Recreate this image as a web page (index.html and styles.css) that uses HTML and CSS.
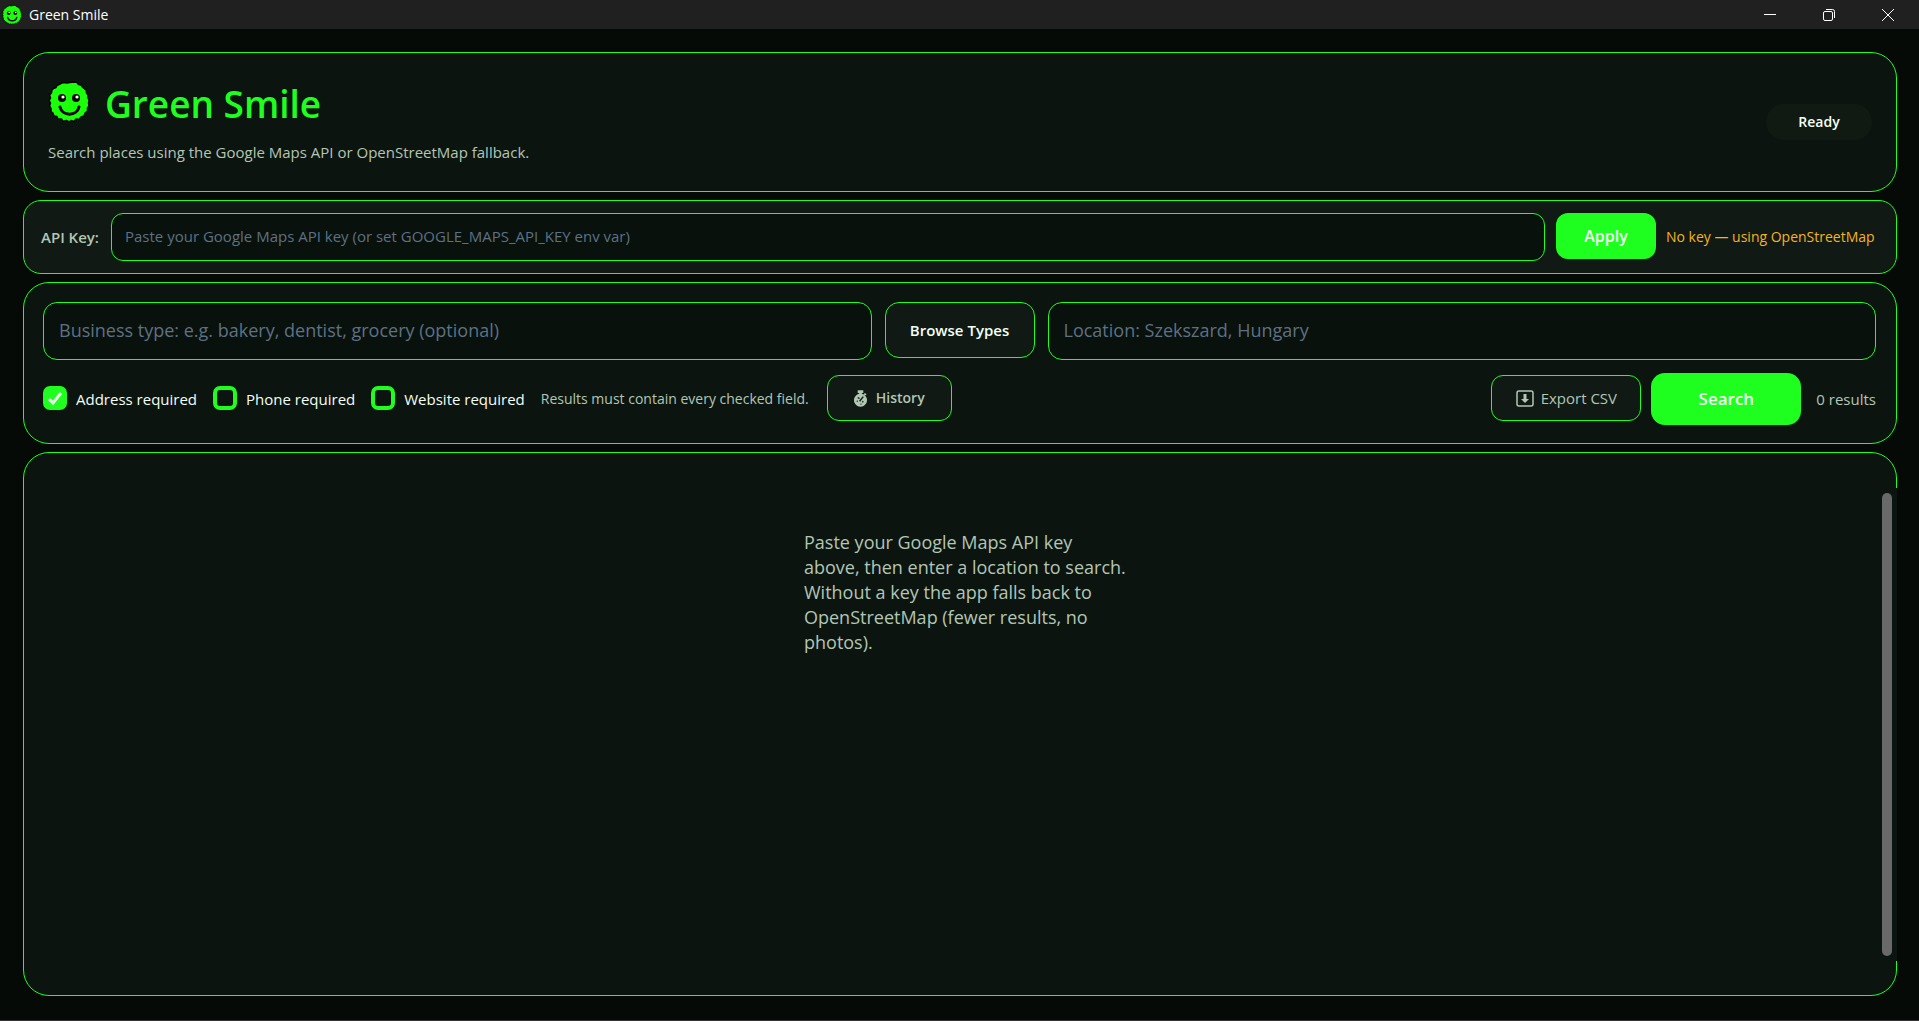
FILE: index.html
```html
<!DOCTYPE html>
<html lang="en">
<head>
<meta charset="utf-8">
<title>Green Smile</title>
<link rel="stylesheet" href="styles.css">
</head>
<body>
<svg class="defs" aria-hidden="true">
  <symbol id="face" viewBox="0 0 42 42">
    <path d="M12 3 15 1.500 19 2 22 1.500 26 1 29 1.500 30.500 3.500 33 4 34.500 6 36 7.500 38 9 38.500 12 40 14 40 17 41 19 40.500 22 41 25 39.500 27 39.500 30 37 32 36 35 33 36 31 38.500 28 38 26 40.500 23 39.500 21 41 18.500 39.500 15 40.500 13.500 38 10 38 9 35.500 6 35 5 32 3 30.500 3 27.500 1.500 25 2.500 22 1 19.500 2.500 17 1.500 14 3.500 12 4 9 5.500 7.500 8 6.500 9 4.500z" fill="#1aff0a" stroke="#020602" stroke-width="1.500" stroke-linejoin="round"/>
    <ellipse cx="14" cy="17" rx="4" ry="4" fill="#020602"/>
    <ellipse cx="28" cy="17" rx="4" ry="4" fill="#020602"/>
    <circle cx="15" cy="16" r="1.600" fill="#fff"/>
    <circle cx="29" cy="16" r="1.600" fill="#fff"/>
    <path d="M12 26c2 9.500 17 9.500 19 0" fill="none" stroke="#020602" stroke-width="3" stroke-linecap="round"/>
  </symbol>
</svg>

<header class="titlebar">
  <svg class="titlebar-icon"><use href="#face"/></svg>
  <span class="titlebar-name">Green Smile</span>
  <button class="winbtn" aria-label="Minimize"><svg viewBox="0 0 12 12"><path d="M0 5.500h12"/></svg></button>
  <button class="winbtn" aria-label="Restore"><svg viewBox="0 0 12 12"><rect x=".5" y="2.500" width="9" height="9" rx="1.500"/><path d="M3 .5h6.500a2 2 0 0 1 2 2V9"/></svg></button>
  <button class="winbtn" aria-label="Close"><svg viewBox="0 0 12 12"><path d="M0 0l12 12M12 0L0 12"/></svg></button>
</header>

<main class="app">
  <section class="card hero">
    <div class="intro">
      <div class="brand">
        <svg class="brand-icon"><use href="#face"/></svg>
        <h1>Green Smile</h1>
      </div>
      <p class="muted tagline">Search places using the Google Maps API or OpenStreetMap fallback.</p>
    </div>
    <span class="status">Ready</span>
  </section>

  <section class="card keybar">
    <label class="key-label" for="key">API Key:</label>
    <input class="field field-key" id="key" type="text" placeholder="Paste your Google Maps API key (or set GOOGLE_MAPS_API_KEY env var)">
    <button class="btn primary apply">Apply</button>
    <span class="warning">No key — using OpenStreetMap</span>
  </section>

  <section class="card search">
    <div class="row">
      <input class="field" type="text" aria-label="Business type" placeholder="Business type: e.g. bakery, dentist, grocery (optional)">
      <button class="btn browse">Browse Types</button>
      <input class="field" type="text" aria-label="Location" placeholder="Location: Szekszard, Hungary">
    </div>
    <div class="row options">
      <label class="check"><input type="checkbox" checked>Address required</label>
      <label class="check"><input type="checkbox">Phone required</label>
      <label class="check"><input type="checkbox">Website required</label>
      <span class="muted hint">Results must contain every checked field.</span>
      <button class="btn small history">
        <svg class="watch" viewBox="0 0 14 18"><path d="M4 0h6v3H8.500v1A7 7 0 1 1 5.500 4V3H4z" fill="currentColor"/><path d="M11 4l2 1" stroke="currentColor" stroke-width="2"/><path d="M4 8l2 1M10 7l-4 5M10 12l-1 1M7 15h1M3 12h1" stroke="#101a14" stroke-width="1.500"/></svg>
        History</button>
      <button class="btn small export">
        <svg class="down" viewBox="0 0 18 17"><rect x="1" y="1" width="16" height="15" rx="2" fill="none" stroke="currentColor" stroke-width="1.500"/><path d="M7.500 4h3v5H13l-4 4-4-4h2.500z" fill="currentColor"/></svg>
        Export CSV</button>
      <button class="btn primary go">Search</button>
      <span class="count">0 results</span>
    </div>
  </section>

  <section class="card results">
    <div class="scroller">
      <p class="muted empty">Paste your Google Maps API key above, then enter a location to search. Without a key the app falls back to OpenStreetMap (fewer results, no photos).</p>
      <div class="thumb"></div>
    </div>
  </section>
</main>
</body>
</html>
```
FILE: styles.css
```css
:root {
  --green: #1fff1f;
  --bg: #050a07;
  --card: #0c1410;
  --raised: #101914;
  --muted: #b2c6b4;
}

* { box-sizing: border-box; }

body {
  margin: 0;
  min-height: 100vh;
  display: flex;
  flex-direction: column;
  background: var(--bg);
  border-bottom: 1px solid #333;
  color: #f4fff4;
  font: 15px/20px "Open Sans", "Noto Sans", sans-serif;
}

h1, p { margin: 0; }
button, input { font: inherit; color: inherit; }
.defs { position: absolute; width: 0; height: 0; }

.titlebar {
  display: flex;
  align-items: center;
  height: 29px;
  padding: 0 2px;
  background: #202020;
  color: #fff;
  font-size: 14px;
}
.titlebar-icon { width: 20px; height: 20px; }
.titlebar-name { margin: 0 auto 0 7px; }
.winbtn {
  width: 59px;
  height: 29px;
  padding: 0;
  border: 0;
  background: none;
  display: grid;
  place-items: center;
}
.winbtn svg { width: 12px; height: 12px; fill: none; stroke: #fff; }

.app {
  flex: 1;
  display: flex;
  flex-direction: column;
  gap: 8px;
  padding: 23px 22px 24px 23px;
}

.card {
  background: var(--card);
  border: 1px solid var(--green);
  border-radius: 26px;
}
.muted { color: var(--muted); }

.hero {
  display: flex;
  align-items: center;
  justify-content: space-between;
  height: 140px;
  padding: 0 24px;
}
.intro { padding-bottom: 5px; }
.brand { display: flex; align-items: center; gap: 15px; }
.brand-icon { width: 42px; height: 42px; margin-bottom: 4px; }
h1 { color: var(--green); font-size: 37px; line-height: 52px; font-weight: 600; }
.tagline { margin-top: 12px; }
.status {
  width: 106px;
  border-radius: 18px;
  background: #101a13;
  text-align: center;
  line-height: 36px;
  font-weight: 600;
  font-size: 14px;
}

.keybar {
  display: flex;
  align-items: center;
  height: 74px;
  padding: 0 17px;
  border-radius: 18px;
  background: var(--raised);
}
.key-label { min-width: 60px; margin-right: 10px; color: var(--muted); font-weight: 600; }
.warning { min-width: 213px; margin-left: 10px; color: #f5b31f; font-size: 14px; }

.field {
  flex: 1;
  min-width: 0;
  height: 58px;
  padding: 0 15px 2px;
  border: 1px solid var(--green);
  border-radius: 14px;
  background: #08110c;
  font-size: 18px;
}
.field::placeholder { color: #5f7084; opacity: 1; }
.field-key { height: 48px; padding: 0 13px 2px; border-radius: 12px; font-size: 15px; }

.btn {
  padding: 0;
  border: 1px solid var(--green);
  border-radius: 14px;
  background: var(--raised);
  font-weight: 600;
}
.primary { background: var(--green); border: 0; color: #f4fff4; }
.apply { width: 100px; height: 46px; margin: 0 0 2px 11px; border-radius: 12px; font-size: 16px; }
.browse { width: 150px; height: 56px; }
.small {
  display: flex;
  align-items: center;
  justify-content: center;
  gap: 7px;
  height: 46px;
  margin-bottom: 2px;
  border-radius: 12px;
  color: var(--muted);
  font-weight: 500;
}
.go { width: 150px; height: 52px; margin-left: 10px; font-size: 17px; }

.search { height: 162px; padding: 19px 20px 0 19px; }
.row { display: flex; gap: 13px; }
.options { gap: 0; align-items: center; margin-top: 13px; }
.check { display: flex; align-items: center; gap: 9px; margin-right: 16px; }
.check input {
  appearance: none;
  width: 24px;
  height: 24px;
  margin: 0 0 2px;
  border: 4px solid var(--green);
  border-radius: 7px;
}
.check input:checked {
  background: var(--green) url("data:image/svg+xml,%3Csvg xmlns='http://www.w3.org/2000/svg' viewBox='0 0 16 16'%3E%3Cpath d='M2 9l4 4 8-10' fill='none' stroke='%23eaffea' stroke-width='3'/%3E%3C/svg%3E") center / 16px no-repeat;
}
.hint { font-size: 14px; }
.history { width: 125px; margin-left: 18px; font-size: 14px; font-weight: 600; gap: 9px; }
.export { width: 150px; margin-left: auto; }
.watch { width: 13px; height: 17px; }
.down { width: 18px; height: 17px; }
.count { color: var(--muted); font-weight: 500; margin-left: 15px; }

.results { flex: 1; display: flex; padding: 35px 0 34px; }
.scroller {
  flex: 1;
  display: grid;
  grid-template-columns: 1fr 324px 1fr;
  margin-right: -1px;
  padding: 5px 5px 5px 16px;
  background: var(--card);
}
.empty { grid-column: 2; margin-top: 37px; font-size: 18px; line-height: 25px; }
.thumb { justify-self: end; width: 10px; border-radius: 5px; background: #696969; }
```
